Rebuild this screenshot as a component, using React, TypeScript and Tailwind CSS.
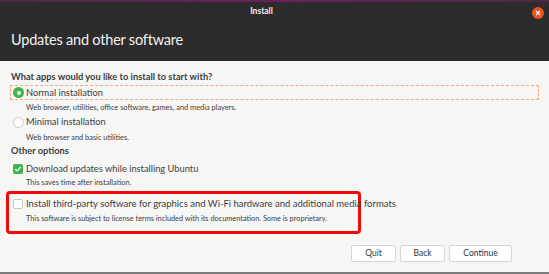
import React from "react";

const font = { fontFamily: 'Lato, "Noto Sans", sans-serif' };

function Radio({ checked }: { checked?: boolean }) {
  return checked ? (
    <span className="w-[11px] h-[11px] rounded-full bg-[#3eb34f] flex items-center justify-center shrink-0">
      <span className="w-[4px] h-[4px] rounded-full bg-white" />
    </span>
  ) : (
    <span className="w-[11px] h-[11px] rounded-full bg-white border border-[#cbc7c3] shrink-0" />
  );
}

function Check({ checked }: { checked?: boolean }) {
  return checked ? (
    <span className="w-[10px] h-[10px] rounded-[2px] bg-[#3eb34f] flex items-center justify-center shrink-0">
      <svg width="8" height="8" viewBox="0 0 8 8">
        <path d="M1.2 4.2 L3.2 6 L6.8 1.8" stroke="white" strokeWidth="1.2" fill="none" />
      </svg>
    </span>
  ) : (
    <span className="w-[10px] h-[10px] rounded-[2px] bg-white border border-[#cbc7c3] shrink-0" />
  );
}

export default function App() {
  return (
    <div className="w-[549px] h-[274px] bg-[#f6f6f5] flex flex-col overflow-hidden text-[#3d3d3d]" style={font}>
      <div className="h-[2px] bg-gradient-to-r from-[#4a2a44] via-[#6b2060] to-[#4a2a44]" />
      <div className="h-[59px] bg-[#2c2c2c] relative flex flex-col">
        <div className="h-[19px] pr-[26px] flex items-center justify-center text-[8.5px] font-bold text-[#eeeeec]">Install</div>
        <div className="absolute right-[5px] top-[5px] w-[12px] h-[12px] rounded-full bg-[#e95420] flex items-center justify-center">
          <svg width="6" height="6" viewBox="0 0 6 6">
            <path d="M1 1 L5 5 M5 1 L1 5" stroke="white" strokeWidth="1.1" />
          </svg>
        </div>
        <div className="pl-[11px] mt-[8px] text-[14.5px] tracking-[-0.2px] leading-[22px] text-[#f2f2f2]">Updates and other software</div>
      </div>
      <div className="flex flex-col pl-[11px] pt-[9px]">
        <div className="h-[14px] flex items-center text-[9.3px] font-bold">What apps would you like to install to start with?</div>
        <div className="ml-[-1px] mr-[10px] mt-[1px] h-[15px] border border-dashed border-[#f2a888] flex items-center pl-[2px] gap-[2px]">
          <Radio checked />
          <span className="text-[9.3px]">Normal installation</span>
        </div>
        <div className="pl-[15px] mt-[1px] h-[14px] flex items-center text-[7.4px]">Web browser, utilities, office software, games, and media players.</div>
        <div className="flex items-center pl-[2px] gap-[2px] h-[14px]">
          <Radio />
          <span className="text-[9.3px]">Minimal installation</span>
        </div>
        <div className="pl-[15px] mt-[2px] h-[14px] flex items-center text-[7.4px]">Web browser and basic utilities.</div>
        <div className="h-[12px] flex items-center text-[9.3px] font-bold">Other options</div>
        <div className="flex items-center pl-[2px] gap-[3px] mt-[5px] h-[14px]">
          <Check checked />
          <span className="text-[9.3px]">Download updates while installing Ubuntu</span>
        </div>
        <div className="pl-[15px] h-[14px] flex items-center text-[7.4px]">This saves time after installation.</div>
        <div className="ml-[-5px] w-[355px] h-[43px] mt-[1px] border-[3px] border-[#f20a0a] rounded-[4px] flex flex-col pt-[3px]">
          <div className="flex items-center pl-[4px] gap-[3px] h-[14px]">
            <Check />
            <span className="text-[9.5px] whitespace-nowrap">Install third-party software for graphics and Wi-Fi hardware and additional media formats</span>
          </div>
          <div className="pl-[17px] mt-[1px] h-[14px] flex items-center text-[7.35px] whitespace-nowrap">This software is subject to license terms included with its documentation. Some is proprietary.</div>
        </div>
      </div>
      <div className="flex justify-end gap-[4px] pr-[37px] mt-[11px]">
        {[
          ["Quit", "w-[45px]"],
          ["Back", "w-[45px]"],
          ["Continue", "w-[63px]"],
        ].map(([t, w]) => (
          <div key={t} className={`${w} h-[17px] bg-white border border-[#d8d4d0] rounded-[2px] flex items-center justify-center text-[8.5px] text-[#333]`}>
            {t}
          </div>
        ))}
      </div>
      <div className="flex-1" />
      <div className="h-[2px] bg-[#7b7b7b]" />
    </div>
  );
}
